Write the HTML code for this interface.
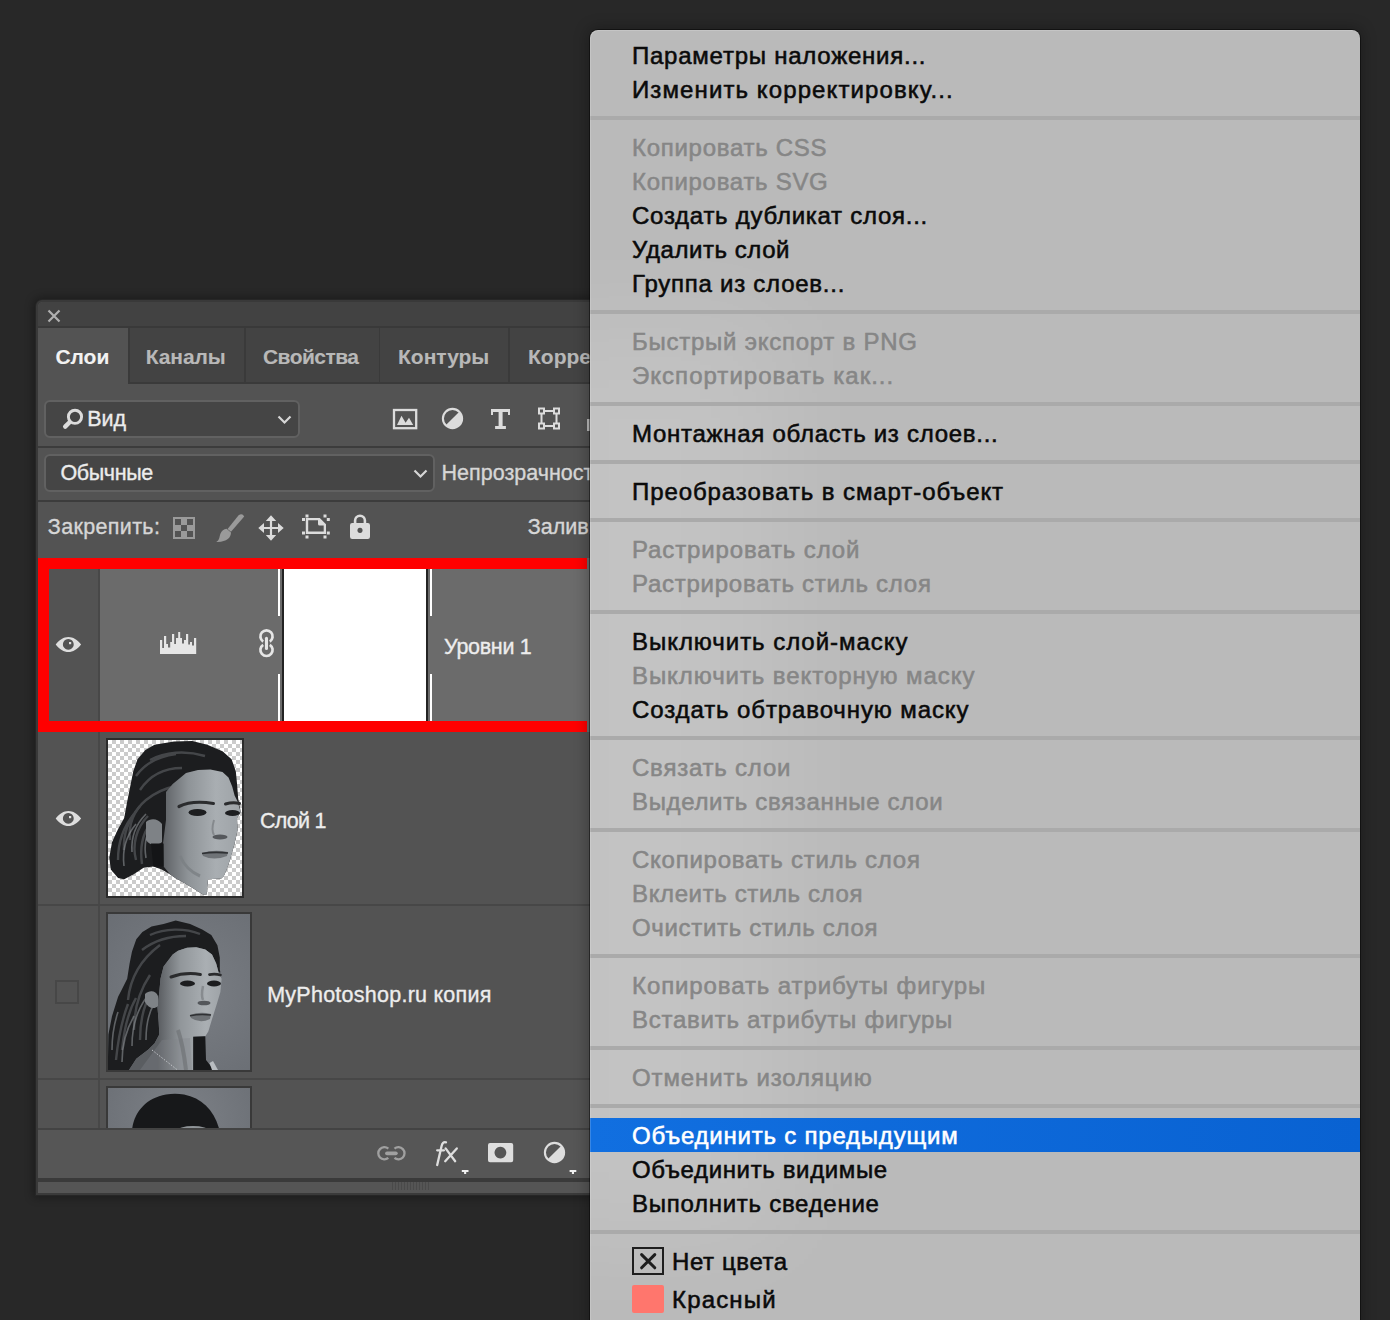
<!DOCTYPE html>
<html><head><meta charset="utf-8">
<style>
*{box-sizing:border-box;margin:0;padding:0}
html,body{width:1390px;height:1320px;overflow:hidden;background:#282828;font-family:"Liberation Sans",sans-serif;position:relative}
.a{position:absolute}
.t{position:absolute;white-space:nowrap;color:#e8e8e8;font-size:21.5px;line-height:24px;-webkit-text-stroke:0.35px currentColor}
.tb{font-weight:bold;font-size:21px;color:#b8b8b8;-webkit-text-stroke:0.1px currentColor}
.hl2{position:absolute;left:38px;width:560px;height:2px;background:#3c3c3c}
.mi{position:absolute;left:0;width:770px;height:34px;line-height:34px;font-size:24px;color:#0a0a0a;white-space:nowrap;-webkit-text-stroke:0.55px currentColor}
.mi span{position:absolute;left:42px;top:1px}
.mi.dis{color:#868686}
.mi.hl{background:linear-gradient(90deg,#116fe0,#0962d2);color:#fff}
.mi.col{height:38px;line-height:38px}
.mi.col span{left:82px;top:-1px}
.sep{position:absolute;left:0;width:770px;height:4px;background:#aaaaaa}
.nocol{position:absolute;left:42px;top:3px;width:32px;height:28px;border:2px solid #1e1e1e;display:block}
.nocol svg{position:absolute;left:0;top:0}
.redsw{position:absolute;left:42px;top:3px;width:32px;height:28px;background:#ff766d;border-radius:2px;display:block}
#menu{position:absolute;left:590px;top:30px;width:770px;height:1310px;background:#bababa;border-radius:8px;overflow:hidden;box-shadow:0 0 0 1px rgba(0,0,0,.45),0 0 14px 3px rgba(0,0,0,.25)}
#menu .glow{position:absolute;left:-80px;top:290px;width:270px;height:920px;background:rgba(255,255,255,.13);filter:blur(50px)}
#menu .rim{position:absolute;left:0;top:0;right:0;bottom:0;border-radius:8px;box-shadow:inset 1px 1px 0 rgba(255,255,255,.16)}
</style></head>
<body>
<!-- ================= PANEL ================= -->
<div class="a" style="left:36px;top:300px;width:580px;height:895px;background:#393939;border-radius:6px 6px 0 0;box-shadow:0 0 0 1px #262626,0 0 9px 3px rgba(0,0,0,.3)"></div>
<div class="a" style="left:38px;top:302px;width:578px;height:891px;background:#535353;border-radius:5px 0 0 0"></div>
<!-- title bar -->
<div class="a" style="left:38px;top:302px;width:578px;height:24px;background:#424242;border-radius:5px 0 0 0"></div>
<div class="a" style="left:38px;top:326px;width:578px;height:2px;background:#393939"></div>
<svg class="a" style="left:46px;top:308px" width="16" height="16" viewBox="0 0 16 16"><path d="M2.5 2.5L13.5 13.5M13.5 2.5L2.5 13.5" stroke="#b0b0b0" stroke-width="2.2"/></svg>
<!-- tabs -->
<div class="a" style="left:38px;top:328px;width:90px;height:56px;background:#535353"></div>
<div class="a" style="left:128px;top:328px;width:488px;height:56px;background:#3a3a3a"></div>
<div class="a" style="left:130px;top:328px;width:114px;height:54px;background:#434343"></div>
<div class="a" style="left:246px;top:328px;width:133px;height:54px;background:#434343"></div>
<div class="a" style="left:380px;top:328px;width:128px;height:54px;background:#434343"></div>
<div class="a" style="left:510px;top:328px;width:106px;height:54px;background:#434343"></div>
<!-- search dropdown -->
<div class="a" style="left:44px;top:400px;width:256px;height:38px;border:2px solid #616161;border-radius:6px;background:#454545"></div>
<svg class="a" style="left:60px;top:406px" width="28" height="26" viewBox="0 0 28 26">
 <circle cx="15" cy="10.8" r="6.6" fill="none" stroke="#dcdcdc" stroke-width="2.9"/>
 <path d="M9.6 16.2L5.2 20.6" stroke="#dcdcdc" stroke-width="4.4" stroke-linecap="round"/>
</svg>
<svg class="a" style="left:276px;top:413px" width="18" height="14" viewBox="0 0 18 14"><path d="M2.5 3.5L8.5 9.5L14.5 3.5" fill="none" stroke="#d6d6d6" stroke-width="2.2"/></svg>
<!-- filter icons -->
<svg class="a" style="left:390px;top:406px" width="180" height="28" viewBox="0 0 180 28">
 <g fill="#dcdcdc" stroke="#dcdcdc">
 <rect x="4" y="4" width="22.2" height="18.2" fill="none" stroke-width="2.3"/>
 <path d="M7 19L11.5 9.7L15.6 16.7L19 11.8L23.2 19Z" stroke="none"/>
 <circle cx="62.5" cy="12.5" r="9.6" fill="none" stroke-width="2.1"/>
 <path d="M69.3 5.7A9.6 9.6 0 0 1 55.7 19.3Z" stroke="none"/>
 <path d="M101 2.9H120V9.1H118V6.1H112.6V19.9H115.9V22.9H105.1V19.9H108.6V6.1H103V9.1H101Z" stroke="none"/>
 <g fill="none" stroke-width="2">
  <rect x="151.5" y="5" width="15" height="15"/>
  <rect x="149" y="2.5" width="5" height="5" fill="#535353"/>
  <rect x="164" y="2.5" width="5" height="5" fill="#535353"/>
  <rect x="149" y="17.5" width="5" height="5" fill="#535353"/>
  <rect x="164" y="17.5" width="5" height="5" fill="#535353"/>
 </g>
 </g>
</svg>
<div class="a" style="left:587px;top:419px;width:3px;height:12px;background:#bdbdbd"></div>
<!-- separator -->
<div class="hl2" style="top:446px"></div>
<!-- blend dropdown -->
<div class="a" style="left:44px;top:454px;width:391px;height:38px;border:2px solid #616161;border-radius:6px;background:#454545"></div>
<svg class="a" style="left:412px;top:467px" width="18" height="14" viewBox="0 0 18 14"><path d="M2.5 3.5L8.5 9.5L14.5 3.5" fill="none" stroke="#d6d6d6" stroke-width="2.2"/></svg>
<div class="hl2" style="top:500px"></div>
<!-- lock icons -->
<svg class="a" style="left:170px;top:512px" width="210" height="34" viewBox="0 0 210 34">
 <g fill="#9a9a9a">
  <path d="M3 5H25V27H3Z M5 7V25H23V7Z" fill-rule="evenodd"/>
  <rect x="11" y="7" width="6" height="6"/><rect x="5" y="13" width="6" height="6"/><rect x="17" y="13" width="6" height="6"/><rect x="11" y="19" width="6" height="6"/>
  <path d="M68.6 3.2Q72.4 0.8 74.2 4.6L61 19.8L57.6 17Z"/>
  <path d="M56.6 16.8L61 20.6C61 26 56.4 30.4 46.2 29.9C49.6 28.4 49.2 25.4 50.4 21.8C51.6 18.6 53.8 17 56.6 16.8Z"/>
 </g>
 <g fill="#dcdcdc">
  <path d="M101 3.2L106.2 9H102.1V15H108V10.9L113.7 16L108 21.1V17H102.1V23H106.2L101 28.8L95.8 23H99.9V17H94V21.1L88.3 16L94 10.9V15H99.9V9H95.8Z"/>
 </g>
 <g fill="#dcdcdc">
  <path d="M135.8 6H149.8L156 12.2V21.9H135.8Z M138.2 8.3V19.6H153.7V13.6H149.6A1.6 1.6 0 0 1 148 12V8.3Z" fill-rule="evenodd"/>
  <rect x="135.5" y="2.5" width="3" height="3"/><rect x="153.5" y="2.5" width="3" height="3"/>
  <rect x="132" y="6" width="3" height="3"/><rect x="156.8" y="6" width="3" height="3"/>
  <rect x="132" y="19.5" width="3" height="3"/><rect x="156.8" y="19.5" width="3" height="3"/>
  <rect x="135.5" y="23.5" width="3" height="3"/><rect x="153.5" y="23.5" width="3" height="3"/>
 </g>
 <g fill="#dcdcdc">
  <path d="M183.8 11V8.6A6.2 6.2 0 0 1 196.2 8.6V11H193.6V8.6A3.6 3.6 0 0 0 186.4 8.6V11Z"/>
  <path d="M182.2 11H197.8Q200 11 200 13.2V24.8Q200 27 197.8 27H182.2Q180 27 180 24.8V13.2Q180 11 182.2 11Z M190 15.8A2.6 2.6 0 1 0 190.01 15.8Z" fill-rule="evenodd"/>
 </g>
</svg>
<!-- ============ layer rows ============ -->
<!-- row1 (selected levels) -->
<div class="a" style="left:38px;top:558px;width:578px;height:174px;background:#6b6b6b"></div>
<div class="a" style="left:38px;top:558px;width:61px;height:174px;background:#535353"></div>
<div class="a" style="left:98px;top:558px;width:2px;height:570px;background:#484848"></div>
<!-- row separators -->
<div class="a" style="left:38px;top:904px;width:578px;height:2px;background:#474747"></div>
<div class="a" style="left:38px;top:1078px;width:578px;height:2px;background:#474747"></div>
<!-- eye icons -->
<svg class="a" style="left:54px;top:634px" width="30" height="22" viewBox="0 0 30 22">
 <path d="M1.7 10.5C5.5 5.6 9.8 2.9 14.4 2.9S23.3 5.6 27.1 10.5C23.3 15.4 19 18 14.4 18S5.5 15.4 1.7 10.5Z M14.3 5A5.4 5.4 0 1 0 14.31 5Z" fill="#dedede" fill-rule="evenodd"/>
 <rect x="15" y="8" width="2.2" height="2.2" fill="#dedede"/>
</svg>
<svg class="a" style="left:54px;top:808px" width="30" height="22" viewBox="0 0 30 22">
 <path d="M1.7 10.5C5.5 5.6 9.8 2.9 14.4 2.9S23.3 5.6 27.1 10.5C23.3 15.4 19 18 14.4 18S5.5 15.4 1.7 10.5Z M14.3 5A5.4 5.4 0 1 0 14.31 5Z" fill="#dedede" fill-rule="evenodd"/>
 <rect x="15" y="8" width="2.2" height="2.2" fill="#dedede"/>
</svg>
<!-- checkbox row3 -->
<div class="a" style="left:55px;top:980px;width:24px;height:24px;border:2px solid #474747"></div>
<!-- levels icon -->
<svg class="a" style="left:158px;top:630px" width="40" height="26" viewBox="0 0 40 26">
 <path fill="#e6e6e6" d="M2 24V10H4.2V18H6V6H8.2V14H10V17.5H12.2V12H14V4H16.2V14H18V8H20.2V2H22.2V8H24V13.5H26V10H28V4H30.2V14.5H32V12H34V15.5H36V8H38.2V24Z"/>
</svg>
<!-- link icon (chain) -->
<svg class="a" style="left:256px;top:626px" width="22" height="36" viewBox="0 0 22 36">
 <path d="M7.18 15.52A6.1 6.1 0 1 1 13.82 15.52 M7.18 18.78A6.1 6.1 0 1 0 13.82 18.78" fill="none" stroke="#e6e6e6" stroke-width="2.7"/>
 <rect x="8.95" y="10.7" width="3.05" height="13.2" rx="1.5" fill="#e6e6e6"/>
</svg>
<!-- mask thumbnail -->
<div class="a" style="left:278px;top:569px;width:2px;height:47px;background:#fff"></div>
<div class="a" style="left:278px;top:674px;width:2px;height:47px;background:#fff"></div>
<div class="a" style="left:430px;top:569px;width:2px;height:47px;background:#fff"></div>
<div class="a" style="left:430px;top:674px;width:2px;height:47px;background:#fff"></div>
<div class="a" style="left:282px;top:569px;width:146px;height:152px;background:#fff;border-left:2px solid #232323;border-right:2px solid #232323"></div>
<!-- thumb 2 : cutout face on checkerboard -->
<div class="a" style="left:106px;top:738px;width:138px;height:160px;background:#2b2b2b"></div>
<div class="a" style="left:108px;top:740px;width:134px;height:156px;background-color:#fff;background-image:linear-gradient(45deg,#cbcbcb 25%,transparent 25%,transparent 75%,#cbcbcb 75%),linear-gradient(45deg,#cbcbcb 25%,transparent 25%,transparent 75%,#cbcbcb 75%);background-size:8px 8px;background-position:0 0,4px 4px"></div>
<svg class="a" style="left:108px;top:740px" width="134" height="156" viewBox="108 740 134 156">
 <defs>
  <linearGradient id="sk2" x1="160" y1="0" x2="240" y2="0" gradientUnits="userSpaceOnUse"><stop offset="0" stop-color="#585b5f"/><stop offset="0.35" stop-color="#8e9397"/><stop offset="0.7" stop-color="#a9aeb2"/><stop offset="1" stop-color="#9ea3a7"/></linearGradient>
 </defs>
 <path fill="#1c1d1f" d="M154.5 744.7L174 741.6L192.2 741L207.3 744.7L222.5 751.3L231.6 759.2L235.8 771.3L237 783.5L238.2 798.6L240 807.7L240.7 812L237 818L237.6 830L234.6 843.5L232.2 852L229.8 860.4L226.7 869.5L223.7 876.2L221.3 878.6L208 879.2L206.7 894.4L203 894.4L192.2 887.7L180 880.4L176 878.6L170.2 874.4L161.8 869.5L153.3 866.5L143.6 867.7L133.3 874.4L124.2 879.2L118.1 878L110.8 869.5L109.3 857.4L112 842.2L118.1 828.9L124.2 818L127.2 801.6L130.2 786.5L133.3 771.3L137.5 759.2L145.4 750Z"/>
 <g fill="none" stroke="#66696d" stroke-width="2.4" opacity="0.55">
  <path d="M130 840C128 825 134 810 146 800C156 792 166 788 176 786"/>
  <path d="M136 860C132 845 136 828 148 816"/>
  <path d="M142 864C140 850 142 835 150 824"/>
  <path d="M118 860C118 842 124 826 134 814"/>
  <path d="M124 850C123 835 128 820 140 806"/>
  <path d="M150 760C165 752 185 750 205 756"/>
  <path d="M140 790C150 775 165 768 182 768"/>
  <path d="M136 776C146 762 160 756 176 754"/>
 </g>
 <g fill="none" stroke="#8d9195" stroke-width="1.6" opacity="0.6">
  <path d="M132 852C131 838 136 824 146 814"/>
  <path d="M124 866C122 850 126 836 136 824"/>
  <path d="M146 858C144 846 146 834 152 826"/>
 </g>
 <path fill="url(#sk2)" d="M172.7 784L177 780.4L186 773L198 770L210.4 769.5L222.5 772L228.5 777.4L232.2 786.5L234.6 795.6L237.6 801.6L240.7 812L237 818L237.6 830L234.6 843.5L232.2 852L229.8 860.4L226.7 869.5L223.7 876.2L221.3 878.6L208 879.2L206.7 894.4L203 894.4L192.2 887.7L180 880.4L176 878.6L170.2 874.4L163.6 866.5L163 843.5L166 820L166 792Z"/>
 <path fill="#7e8286" d="M146 822C150 818 158 818 162 824L162 842C158 846 150 846 146 840Z"/>
 <path fill="#141517" d="M151 843.5L163.6 843.5L163.6 866.5L153.3 866.5Z"/>
 <g fill="none" stroke="#2b2c2e" stroke-linecap="round">
  <path d="M179 806.5Q192 800 213.4 803.5" stroke-width="3.2"/>
  <path d="M225.5 804Q233 802 239.5 803.5" stroke-width="3"/>
 </g>
 <ellipse cx="197.5" cy="812.5" rx="9" ry="3.4" fill="#1d1e20"/>
 <ellipse cx="232.5" cy="813" rx="7.5" ry="3" fill="#1d1e20"/>
 <ellipse cx="220" cy="837" rx="7.5" ry="2.6" fill="#55585c"/>
 <path d="M214 820Q211 830 214 835" stroke="#85898d" stroke-width="2" fill="none"/>
 <path d="M202 853Q214 849 228 852L227 856Q214 861 203 856Z" fill="#6f7377"/>
 <path d="M202 853.5Q214 851.5 228 853" stroke="#2f3134" stroke-width="1.6" fill="none"/>
 <path d="M180 856Q186 870 200 876" stroke="#7b7f83" stroke-width="3" fill="none" opacity="0.8"/>
</svg>
<!-- thumb 3 : portrait -->
<div class="a" style="left:106px;top:912px;width:146px;height:160px;background:#393939"></div>
<svg class="a" style="left:108px;top:914px" width="142" height="156" viewBox="108 914 142 156">
 <defs>
  <radialGradient id="bg3" cx="190" cy="990" r="110" gradientUnits="userSpaceOnUse"><stop offset="0" stop-color="#7a7e84"/><stop offset="1" stop-color="#6a6e74"/></radialGradient>
  <linearGradient id="sk3" x1="158" y1="0" x2="222" y2="0" gradientUnits="userSpaceOnUse"><stop offset="0" stop-color="#5a5d61"/><stop offset="0.35" stop-color="#91969a"/><stop offset="0.75" stop-color="#aaafb3"/><stop offset="1" stop-color="#9ea3a7"/></linearGradient>
 </defs>
 <rect x="100" y="900" width="160" height="180" fill="url(#bg3)"/>
 <path fill="#1c1d1f" d="M175.7 920.5L190.1 924.1L202.2 929.6L211.3 935L217.4 945.3L219.8 957.5L219.8 969.6L220.4 972.6L218.6 972.6L216.2 963.5L212 954.4L205.3 949.6L196.2 947.2L187 947.8L178 950.8L172.7 954.4L163.6 966.5L160.5 978.7L159.3 992L157.5 1007.2L158.7 1022.3L159.3 1034.4L154.5 1043.5L148.4 1049.6L136.3 1058.7L129 1070L108 1070L107.8 1069.6L108.4 1034.4L112 1016.2L118.1 996.8L121.2 990.8L127.2 978.7L129.6 963.5L132 951.4L136.3 939.3L142.4 932L151.5 926.5L163.6 924.1Z"/>
 <g fill="none" stroke="#66696d" stroke-width="2.4" opacity="0.55">
  <path d="M128 1000C130 980 140 960 160 945"/>
  <path d="M134 1030C134 1010 140 990 150 975"/>
  <path d="M140 1040C140 1020 144 1004 152 992"/>
  <path d="M116 1060C118 1040 122 1020 128 1004"/>
  <path d="M122 1050C124 1030 128 1012 136 998"/>
  <path d="M150 935C165 928 185 928 200 934"/>
  <path d="M142 950C155 940 170 936 186 936"/>
 </g>
 <g fill="none" stroke="#8d9195" stroke-width="1.6" opacity="0.6">
  <path d="M132 1046C132 1028 136 1012 146 998"/>
  <path d="M122 1062C122 1046 126 1030 134 1016"/>
  <path d="M112 1050C112 1036 114 1024 118 1012"/>
  <path d="M146 1040C146 1026 148 1014 154 1004"/>
 </g>
 <path fill="url(#sk3)" d="M172.7 954.4L178 950.8L187 947.8L196.2 947.2L205.3 949.6L212 954.4L216.2 963.5L218.6 972.6L221.6 978.7L220.4 992L216.8 1004L212 1019.3L208.3 1031.4L205.3 1036.2L193.2 1036.8L193.2 1070L129 1070L136.3 1058.7L148.4 1049.6L154.5 1043.5L159.3 1034.4L158.7 1022.3L157.5 1007.2L159.3 992L160.5 978.7L163.6 966.5Z"/>
 <path fill="#17181a" d="M193.2 1036.8L205.3 1036.2L206 1060L214 1070L193.2 1070Z"/>
 <path fill="#b8bcc0" d="M209.5 1063L213 1061L218 1070L212 1070Z"/>
 <path fill="#80848a" d="M162 1040L190 1038L192 1070L140 1070Z" opacity="0.35"/>
 <path fill="#7f8387" d="M145 994C149 990 156 990 158 996L158 1006C154 1010 148 1008 145 1002Z"/>
 <g fill="none" stroke="#2a2b2d" stroke-linecap="round">
  <path d="M171 977Q185 972 200.4 974.4" stroke-width="3"/>
  <path d="M209.5 974.6Q215 973.5 220.4 975" stroke-width="2.8"/>
 </g>
 <ellipse cx="187.5" cy="983.5" rx="7.5" ry="3" fill="#1c1d1f"/>
 <ellipse cx="214" cy="983.5" rx="7" ry="3" fill="#1c1d1f"/>
 <path d="M203 986Q201 996 203 1000" stroke="#878b8f" stroke-width="2.5" fill="none"/><ellipse cx="204" cy="1003" rx="6.5" ry="2.3" fill="#54575b"/>
 <path d="M190 1015Q200 1011 211 1014L210 1019Q200 1024 191 1018Z" fill="#6e7276"/>
 <path d="M190 1015.8Q200 1013.5 211 1015" stroke="#2f3134" stroke-width="1.5" fill="none"/>
 <path d="M178 1030Q183 1045 186 1070" stroke="#6a6e72" stroke-width="4" fill="none" opacity="0.6"/>
 <path d="M152 1050L177 1069.6" stroke="#c9ccd0" stroke-width="0.9" stroke-dasharray="1.5 1.5" fill="none"/>
</svg>
<!-- thumb 4 : partial -->
<div class="a" style="left:106px;top:1086px;width:146px;height:42px;background:#393939"></div>
<svg class="a" style="left:108px;top:1088px" width="142" height="40" viewBox="108 1088 142 40">
 <defs><radialGradient id="bg4" cx="180" cy="1120" r="90" gradientUnits="userSpaceOnUse"><stop offset="0" stop-color="#7d8187"/><stop offset="1" stop-color="#6b6f75"/></radialGradient></defs>
 <rect x="100" y="1080" width="160" height="60" fill="url(#bg4)"/>
 <path fill="#17181a" d="M132 1130C134 1112 146 1098 166 1094.5C172 1093.5 178 1093.5 184 1094.5C202 1098 214 1110 219.5 1130Z"/>
 <ellipse cx="193" cy="1131" rx="16" ry="5" fill="#8f9498"/>
</svg>

<!-- footer -->
<div class="a" style="left:38px;top:1128px;width:578px;height:2px;background:#434343"></div>
<div class="a" style="left:38px;top:1130px;width:578px;height:48px;background:#565656"></div>
<div class="a" style="left:38px;top:1178px;width:578px;height:4px;background:#3a3a3a"></div>
<div class="a" style="left:38px;top:1182px;width:578px;height:11px;background:#555555"></div>
<div class="a" style="left:36px;top:1193px;width:580px;height:2px;background:#3a3a3a"></div>
<svg class="a" style="left:390px;top:1182px" width="42" height="9" viewBox="0 0 42 9"><g fill="#4a4a4a"><rect x="2" y="0" width="1" height="8"/><rect x="5" y="0" width="1" height="8"/><rect x="8" y="0" width="1" height="8"/><rect x="11" y="0" width="1" height="8"/><rect x="14" y="0" width="1" height="8"/><rect x="17" y="0" width="1" height="8"/><rect x="20" y="0" width="1" height="8"/><rect x="23" y="0" width="1" height="8"/><rect x="26" y="0" width="1" height="8"/><rect x="29" y="0" width="1" height="8"/><rect x="32" y="0" width="1" height="8"/><rect x="35" y="0" width="1" height="8"/><rect x="38" y="0" width="1" height="8"/></g></svg>
<svg class="a" style="left:370px;top:1136px" width="220" height="42" viewBox="0 0 220 42">
 <path d="M18.32 12.63A6.1 6.1 0 1 0 18.32 21.97 M24.48 12.63A6.1 6.1 0 1 1 24.48 21.97" fill="none" stroke="#a0a0a0" stroke-width="2.3"/>
 <rect x="15.1" y="15.4" width="12.6" height="3.8" rx="1.9" fill="#a0a0a0"/>
 <g fill="none" stroke="#dedede" stroke-width="2.3" stroke-linecap="round">
  <path d="M76 6.4C73.6 5.6 72.2 7.2 71.6 10L67.2 29"/>
  <path d="M67.2 14.3H74"/>
  <path d="M75.6 12.4L85.2 25.2M86.8 12.4L75.2 25.2"/>
 </g>
 <path d="M91.8 34H98.5V36H96.2V38H94.1V36H91.8Z" fill="#f0f0f0"/>
 <g fill="#dedede">
  <path d="M120 7H141.2Q143.2 7 143.2 9V24.2Q143.2 26.2 141.2 26.2H120Q118 26.2 118 24.2V9Q118 7 120 7Z M130.4 10.7A5.9 5.9 0 1 0 130.41 10.7Z" fill-rule="evenodd"/>
  <circle cx="184.5" cy="16.5" r="9.6" fill="none" stroke="#dedede" stroke-width="2.1"/>
  <path d="M191.3 9.7A9.6 9.6 0 0 1 177.7 23.3Z"/>
 </g>
 <path d="M199.6 34H206.3V36H204V38H201.9V36H199.6Z" fill="#f0f0f0"/>
</svg>
<div class="t tb" style="left:55.4px;top:345px;letter-spacing:0px;color:#f2f2f2">Слои</div>
<div class="t tb" style="left:145.8px;top:345px;letter-spacing:-0.1px;color:#b8b8b8">Каналы</div>
<div class="t tb" style="left:263px;top:345px;letter-spacing:-0.55px;color:#b8b8b8">Свойства</div>
<div class="t tb" style="left:398px;top:345px;letter-spacing:0px;color:#b8b8b8">Контуры</div>
<div class="t tb" style="left:528px;top:345px;letter-spacing:0px;color:#b8b8b8">Корректировка</div>
<div class="t" style="left:87.2px;top:407px;letter-spacing:0px;color:#ececec">Вид</div>
<div class="t" style="left:60.4px;top:461px;letter-spacing:-0.35px;color:#ececec">Обычные</div>
<div class="t" style="left:441.6px;top:461px;letter-spacing:0px;color:#d6d6d6">Непрозрачность:</div>
<div class="t" style="left:47.8px;top:515px;letter-spacing:0.35px;color:#d6d6d6">Закрепить:</div>
<div class="t" style="left:527.8px;top:515px;letter-spacing:0px;color:#d6d6d6">Заливка:</div>
<div class="t" style="left:444.0px;top:635px;letter-spacing:-0.3px;color:#ededed">Уровни 1</div>
<div class="t" style="left:260.0px;top:809px;letter-spacing:-0.75px;color:#ededed">Слой 1</div>
<div class="t" style="left:267.2px;top:983px;letter-spacing:0.25px;color:#ededed">MyPhotoshop.ru копия</div>
<!-- red box -->
<div class="a" style="left:38px;top:558px;width:549px;height:11px;background:#ff0000"></div>
<div class="a" style="left:38px;top:721px;width:549px;height:11px;background:#ff0000"></div>
<div class="a" style="left:38px;top:558px;width:11px;height:174px;background:#ff0000"></div>
<!-- menu shadow on panel -->
<!-- ================= MENU ================= -->
<div id="menu">
<div class="glow"></div>
<div class="mi" style="top:8px"><span style="letter-spacing:0.757px">Параметры наложения...</span></div>
<div class="mi" style="top:42px"><span style="letter-spacing:1.105px">Изменить корректировку...</span></div>
<div class="sep" style="top:86px"></div>
<div class="mi dis" style="top:100px"><span style="letter-spacing:0.713px">Копировать CSS</span></div>
<div class="mi dis" style="top:134px"><span style="letter-spacing:0.707px">Копировать SVG</span></div>
<div class="mi" style="top:168px"><span style="letter-spacing:0.735px">Создать дубликат слоя...</span></div>
<div class="mi" style="top:202px"><span style="letter-spacing:0.559px">Удалить слой</span></div>
<div class="mi" style="top:236px"><span style="letter-spacing:0.755px">Группа из слоев...</span></div>
<div class="sep" style="top:280px"></div>
<div class="mi dis" style="top:294px"><span style="letter-spacing:0.75px">Быстрый экспорт в PNG</span></div>
<div class="mi dis" style="top:328px"><span style="letter-spacing:1.03px">Экспортировать как...</span></div>
<div class="sep" style="top:372px"></div>
<div class="mi" style="top:386px"><span style="letter-spacing:0.72px">Монтажная область из слоев...</span></div>
<div class="sep" style="top:430px"></div>
<div class="mi" style="top:444px"><span style="letter-spacing:0.912px">Преобразовать в смарт-объект</span></div>
<div class="sep" style="top:488px"></div>
<div class="mi dis" style="top:502px"><span style="letter-spacing:0.87px">Растрировать слой</span></div>
<div class="mi dis" style="top:536px"><span style="letter-spacing:0.741px">Растрировать стиль слоя</span></div>
<div class="sep" style="top:580px"></div>
<div class="mi" style="top:594px"><span style="letter-spacing:0.959px">Выключить слой-маску</span></div>
<div class="mi dis" style="top:628px"><span style="letter-spacing:0.928px">Выключить векторную маску</span></div>
<div class="mi" style="top:662px"><span style="letter-spacing:0.894px">Создать обтравочную маску</span></div>
<div class="sep" style="top:706px"></div>
<div class="mi dis" style="top:720px"><span style="letter-spacing:0.782px">Связать слои</span></div>
<div class="mi dis" style="top:754px"><span style="letter-spacing:0.661px">Выделить связанные слои</span></div>
<div class="sep" style="top:798px"></div>
<div class="mi dis" style="top:812px"><span style="letter-spacing:0.749px">Скопировать стиль слоя</span></div>
<div class="mi dis" style="top:846px"><span style="letter-spacing:0.622px">Вклеить стиль слоя</span></div>
<div class="mi dis" style="top:880px"><span style="letter-spacing:0.671px">Очистить стиль слоя</span></div>
<div class="sep" style="top:924px"></div>
<div class="mi dis" style="top:938px"><span style="letter-spacing:0.9px">Копировать атрибуты фигуры</span></div>
<div class="mi dis" style="top:972px"><span style="letter-spacing:0.739px">Вставить атрибуты фигуры</span></div>
<div class="sep" style="top:1016px"></div>
<div class="mi dis" style="top:1030px"><span style="letter-spacing:0.895px">Отменить изоляцию</span></div>
<div class="sep" style="top:1074px"></div>
<div class="mi hl" style="top:1088px"><span style="letter-spacing:0.784px">Объединить с предыдущим</span></div>
<div class="mi" style="top:1122px"><span style="letter-spacing:0.64px">Объединить видимые</span></div>
<div class="mi" style="top:1156px"><span style="letter-spacing:0.725px">Выполнить сведение</span></div>
<div class="sep" style="top:1200px"></div>
<div class="mi col" style="top:1214px"><i class="nocol"><svg width="28" height="24" viewBox="0 0 28 24"><path d="M7.6 5.6 L20.8 18.8 M20.8 5.6 L7.6 18.8" stroke="#1e1e1e" stroke-width="3" stroke-linecap="round"/></svg></i><span style="letter-spacing:0.604px">Нет цвета</span></div>
<div class="mi col" style="top:1252px"><i class="redsw"></i><span style="letter-spacing:1.165px">Красный</span></div>
<div class="rim"></div>
</div>
</body></html>
